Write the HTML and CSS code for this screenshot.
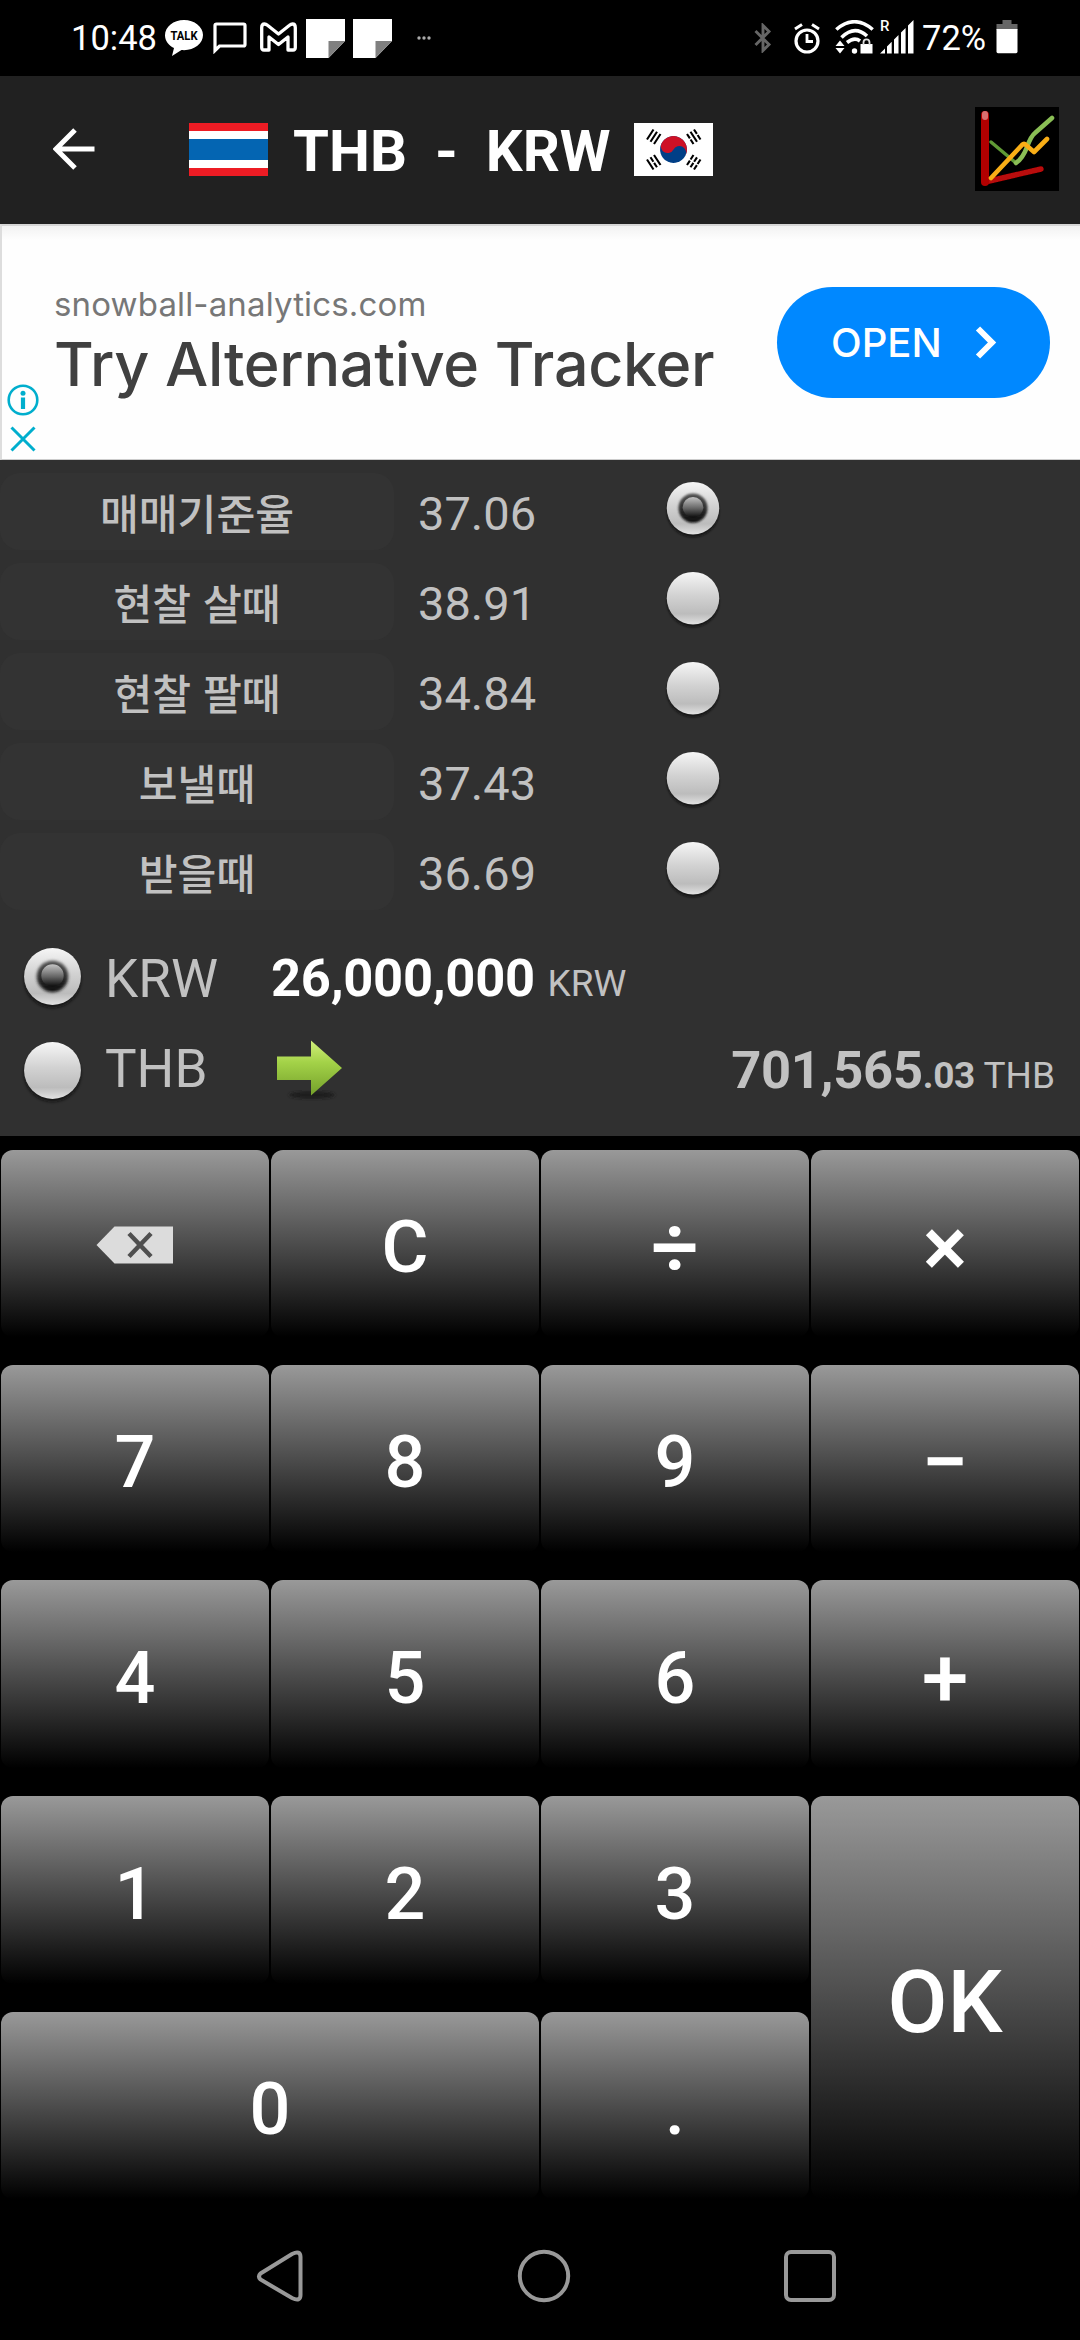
FILE: index.html
```html
<!DOCTYPE html>
<html lang="ko">
<head>
<meta charset="utf-8">
<title>THB - KRW</title>
<link rel="stylesheet" href="styles.css">
</head>
<body>
<svg class="defs" width="0" height="0" aria-hidden="true">
  <defs>
    <linearGradient id="ball" x1="0" y1="0" x2="0" y2="1"><stop offset="0" stop-color="#f6f6f6"/><stop offset=".45" stop-color="#d2d2d2"/><stop offset=".8" stop-color="#bcbcbc"/><stop offset="1" stop-color="#e2e2e2"/></linearGradient>
    <linearGradient id="dot" x1="0" y1="0" x2="0" y2="1"><stop offset="0" stop-color="#c4c4c4"/><stop offset=".55" stop-color="#666"/><stop offset="1" stop-color="#0c0c0c"/></linearGradient>
    <linearGradient id="rim" x1="0" y1="0" x2="0" y2="1"><stop offset="0" stop-color="#555"/><stop offset="1" stop-color="#0a0a0a"/></linearGradient>
    <linearGradient id="green" x1="0" y1="0" x2="0" y2="1"><stop offset="0" stop-color="#d2f07a"/><stop offset=".4" stop-color="#a3d248"/><stop offset="1" stop-color="#74a02a"/></linearGradient>
    <filter id="soft" x="-20%" y="-20%" width="140%" height="150%"><feGaussianBlur stdDeviation="1.4"/></filter>
    <filter id="haze" x="-10%" y="-10%" width="120%" height="120%"><feGaussianBlur stdDeviation=".7"/></filter>
    <symbol id="radio-off" viewBox="0 0 64 66"><circle cx="32" cy="34" r="28" fill="#111" opacity=".75" filter="url(#soft)"/><circle cx="32" cy="31" r="28" fill="url(#ball)"/></symbol>
    <symbol id="radio-on" viewBox="0 0 64 66"><circle cx="32" cy="34" r="28" fill="#111" opacity=".75" filter="url(#soft)"/><circle cx="32" cy="31" r="28" fill="url(#ball)"/><circle cx="32" cy="31" r="15.5" fill="url(#rim)" filter="url(#soft)"/><circle cx="32" cy="30" r="11" fill="url(#dot)"/></symbol>
  </defs>
</svg>
<div class="screen">
  <header class="status">
    <span class="clock">10:48</span>
    <svg class="s-talk" width="38" height="36" viewBox="0 0 38 36"><path d="M19 0C8.500 0 0 6.800 0 15.200c0 5.500 3.600 10.200 9 12.900L7 36l9.500-5.900c.8.100 1.700.1 2.500.1 10.500 0 19-6.700 19-15.100S29.500 0 19 0z" fill="#fff"/><text x="19" y="20" text-anchor="middle" textLength="27" lengthAdjust="spacingAndGlyphs" class="talk-text">TALK</text></svg>
    <svg class="s-chat" width="34" height="32" viewBox="0 0 34 32"><path d="M2 28.500V3.500Q2 2 3.500 2H30.500Q32 2 32 3.500V22.500Q32 24 30.500 24H6.500z" fill="none" stroke="#fff" stroke-width="3.200"/></svg>
    <svg class="s-mail" width="37" height="30" viewBox="0 0 37 30"><path d="M4 28Q1.700 28 1.700 25.500V5.500Q1.700 2 4.500 2Q6 2 7.500 3.300L18.500 12L29.500 3.300Q31 2 32.500 2Q35.300 2 35.300 5.500V25.500Q35.300 28 33 28H28V15L18.500 22.500L9 15V28z" fill="none" stroke="#fff" stroke-width="3.300" stroke-linejoin="round"/></svg>
    <svg class="s-note" width="39" height="39" viewBox="0 0 39 39"><path d="M0 0H39V22L22.500 39H0z" fill="#fff"/><path d="M22.500 22H39L22.500 39z" fill="#808080"/></svg>
    <svg class="s-note second" width="39" height="39" viewBox="0 0 39 39"><path d="M0 0H39V22L22.500 39H0z" fill="#fff"/><path d="M22.500 22H39L22.500 39z" fill="#808080"/></svg>
    <svg class="s-more" width="14" height="4" viewBox="0 0 14 4"><circle cx="2" cy="2" r="1.700" fill="#aaa"/><circle cx="7" cy="2" r="1.700" fill="#aaa"/><circle cx="12" cy="2" r="1.700" fill="#aaa"/></svg>
    <span class="grow"></span>
    <svg class="s-bt" width="18" height="30" viewBox="0 0 18 30"><path d="M1.500 8L15 21.500L9 27.500V2.500L15 8.500L1.500 22" fill="none" stroke="#666" stroke-width="2.900"/></svg>
    <svg class="s-alarm" width="26" height="31" viewBox="0 0 26 31" fill="none" stroke="#fff"><circle cx="13" cy="18" r="11" stroke-width="3.200"/><path d="M13 11V18.500H19" stroke-width="2.800"/><path d="M1 6L8 1.500M25 6L18 1.500" stroke-width="3"/></svg>
    <svg class="s-wifi" width="39" height="34" viewBox="0 0 39 34"><g fill="none" stroke="#fff" stroke-width="3.600"><path d="M1.300 9.500Q19.500-6 37.700 9.500"/><path d="M6.500 17.500Q19.500 4.500 32 16"/><path d="M12 22.500Q19.500 16.500 25 21"/></g><circle cx="19.500" cy="31" r="2.700" fill="#fff"/><path d="M.5 26L5 20.500L9.500 26zM.5 28L5 33.500L9.500 28z" fill="#fff"/><rect x="25.500" y="24" width="12" height="9.500" fill="#fff"/><path d="M28.500 25V22.500Q28.500 19.300 31.500 19.300T34.500 22.500V25" fill="none" stroke="#ddd" stroke-width="1.800"/></svg>
    <svg class="s-signal" width="34" height="38" viewBox="0 -4 34 38" fill="#fff"><path d="M0 33.500L5 28.500V33.500zM7 33.500V26.500L11.700 21.800V33.500zM14 33.500V19.500L18.500 15V33.500zM21 33.500V12.500L25.600 7.900V33.500zM28 33.500V5.600L33.500 0V33.500z"/><text x="0" y="11" class="roam">R</text></svg>
    <span class="pct">72%</span>
    <svg class="s-batt" width="22" height="34" viewBox="0 0 22 34"><path d="M6.500 0H15.500V4H21.500V10H.5V4H6.500z" fill="#666"/><path d="M.5 9H21.500V31.500Q21.500 33.200 20 33.200H2Q.5 33.200 .5 31.500z" fill="#fff"/></svg>
  </header>

  <div class="appbar">
    <svg class="back" width="42" height="42" viewBox="0 0 42 42"><path d="M41.500 21H3.500M22 2L3 21L22 40" fill="none" stroke="#fff" stroke-width="5"/></svg>
    <svg class="flag" width="79" height="53" viewBox="0 0 79 53"><path fill="#fff" d="M0 0h79v53H0z"/><path fill="#ed1c24" d="M0 0h79v8H0zM0 45h79v8H0z"/><path fill="#0465b2" d="M0 16h79v21H0z"/></svg>
    <h1 class="pair"><span>THB</span><span>-</span><span>KRW</span></h1>
    <svg class="flag" width="79" height="53" viewBox="0 0 79 53"><path fill="#fff" d="M0 0h79v53H0z"/>
      <g transform="translate(39.500 26.500) rotate(28)"><circle r="13.400" fill="#003f87"/><path d="M-13.400 0A13.400 13.400 0 0 1 13.400 0A6.700 6.700 0 0 0 0 0A6.700 6.700 0 0 1 -13.400 0z" fill="#ce1126"/></g>
      <g fill="none" stroke="#000" stroke-width="2.100">
        <path d="M13 16.500L19.500 6.500M16.500 18.700L23 8.700M20 21L26.500 11"/>
        <path d="M13 36.500L19.500 46.500M20 32L26.500 42"/><path d="M16.500 34.300L23 44.300" stroke-dasharray="5.300 1.300"/>
        <path d="M53 11L59.500 21M60 6.500L66.500 16.500" stroke-dasharray="5.300 1.300"/><path d="M56.500 8.700L63 18.700"/>
        <path d="M53 42L59.500 32M56.500 44.300L63 34.300M60 46.500L66.500 36.500" stroke-dasharray="5.300 1.300"/>
      </g></svg>
    <span class="grow"></span>
    <svg class="chart" width="84" height="84" viewBox="0 0 84 84"><path fill="#000" d="M0 0h84v84H0z"/><g fill="none" stroke-linecap="round" filter="url(#haze)"><path d="M16 35L41 56" stroke="#609a36" stroke-width="3.500"/><path d="M41 56Q48 51 52 40T60 26L77 11" stroke="#8abe55" stroke-width="4.600"/><path d="M10 75L66 62" stroke="#b80808" stroke-width="5.500"/><path d="M10 8V75" stroke="#b20000" stroke-width="8"/><path d="M10 7V10" stroke="#d87070" stroke-width="6"/><path d="M16 71L47 38Q49 36 51 38L59 45L72 32" stroke="#f9ae18" stroke-width="4.600" stroke-linejoin="round"/></g></svg>
  </div>

  <section class="ad">
    <div class="ad-choices">
      <svg width="32" height="32" viewBox="0 0 32 32"><circle cx="16" cy="16" r="14.300" fill="none" stroke="#00aecd" stroke-width="2.600"/><circle cx="16" cy="9.200" r="2.500" fill="#00aecd"/><path d="M16 13.500V25" stroke="#00aecd" stroke-width="4.200"/></svg>
      <svg width="32" height="26" viewBox="0 0 32 26"><path d="M4.500 1.500L27.500 24.500M27.500 1.500L4.500 24.500" stroke="#00aecd" stroke-width="3"/></svg>
    </div>
    <div class="ad-copy">
      <div class="ad-site">snowball-analytics.com</div>
      <div class="ad-title">Try Alternative Tracker</div>
    </div>
    <a class="ad-button"><span>OPEN</span><svg width="24" height="33" viewBox="0 0 24 33"><path d="M4 2.500L18 16.500L4 30.500" fill="none" stroke="#fff" stroke-width="6"/></svg></a>
  </section>

  <main class="panel">
    <div class="rates">
      <div class="rate"><span class="label">매매기준율</span><span class="value">37.06</span><svg class="radio" width="60" height="62"><use href="#radio-on"/></svg></div>
      <div class="rate"><span class="label">현찰 살때</span><span class="value">38.91</span><svg class="radio" width="60" height="62"><use href="#radio-off"/></svg></div>
      <div class="rate"><span class="label">현찰 팔때</span><span class="value">34.84</span><svg class="radio" width="60" height="62"><use href="#radio-off"/></svg></div>
      <div class="rate"><span class="label">보낼때</span><span class="value">37.43</span><svg class="radio" width="60" height="62"><use href="#radio-off"/></svg></div>
      <div class="rate"><span class="label">받을때</span><span class="value">36.69</span><svg class="radio" width="60" height="62"><use href="#radio-off"/></svg></div>
    </div>
    <div class="convert from">
      <svg class="big-radio" width="65" height="67"><use href="#radio-on"/></svg>
      <span class="code">KRW</span>
      <span class="amount"><b>26,000,000 </b><small>KRW</small></span>
    </div>
    <div class="convert to">
      <svg class="big-radio" width="65" height="67"><use href="#radio-off"/></svg>
      <span class="code">THB</span>
      <svg class="arrow" width="70" height="62" viewBox="0 0 70 62"><ellipse cx="37" cy="56" rx="23" ry="3.500" fill="#1c1c1c" filter="url(#soft)"/><path d="M2 17.500H36V1.500L67 29L36 56.500V41H2z" fill="url(#green)"/></svg>
      <span class="amount result"><b>701,565</b><b class="cents">.03</b> <small>THB</small></span>
    </div>
  </main>

  <div class="keypad">
    <button class="key back-key"><svg width="78" height="38" viewBox="0 0 78 38"><path d="M.5 19L18.500 .5H77V37.500H18.500z" fill="#dcdcdc"/><path d="M33 7.500L55 30.500M55 7.500L33 30.500" stroke="#505050" stroke-width="4.500"/></svg></button>
    <button class="key">C</button>
    <button class="key op">÷</button>
    <button class="key op">×</button>
    <button class="key">7</button>
    <button class="key">8</button>
    <button class="key">9</button>
    <button class="key op">−</button>
    <button class="key">4</button>
    <button class="key">5</button>
    <button class="key">6</button>
    <button class="key op">+</button>
    <button class="key">1</button>
    <button class="key">2</button>
    <button class="key">3</button>
    <button class="key ok">OK</button>
    <button class="key zero">0</button>
    <button class="key">.</button>
  </div>

  <nav class="navbar">
    <svg width="48" height="54" viewBox="0 0 48 54"><path d="M4.500 24.500L36 5Q44.500 1 44.500 8V46Q44.500 53 36 49L4.500 30.500Q1.500 27.500 4.500 24.500z" fill="none" stroke="#999" stroke-width="4"/></svg>
    <svg width="54" height="54" viewBox="0 0 54 54"><circle cx="27" cy="27" r="24.200" fill="none" stroke="#999" stroke-width="4"/></svg>
    <svg width="54" height="54" viewBox="0 0 54 54"><rect x="3" y="3" width="48" height="48" rx="5" fill="none" stroke="#999" stroke-width="4"/></svg>
  </nav>
</div>
</body>
</html>
```
FILE: styles.css
```css
* { box-sizing: border-box; }
body { margin: 0; background: #000; font-family: Roboto, "Noto Sans CJK KR", sans-serif; }
svg { display: block; flex: none; }
.defs { position: absolute; }
.screen { width: 1080px; height: 2340px; display: flex; flex-direction: column; background: #000; overflow: hidden; }
.grow { flex: 1; }

.status { height: 76px; flex: none; display: flex; align-items: center; padding: 0 62px 0 71px; color: #fff; font-size: 34.500px; line-height: 76px; }
.clock { width: 94px; }
.s-chat { margin-left: 10px; }
.s-mail { margin: 0 9px 2px 13px; }
.s-note.second { margin-left: 8px; }
.s-more { margin-left: 25px; }
.s-alarm { margin-left: 22px; }
.s-wifi { margin: 0 0 2px 15px; }
.s-signal { margin: 0 0 6px 6px; }
.s-batt { margin: 0 0 2px 0; }
.pct { margin-left: 8px; width: 74px; white-space: nowrap; }
.talk-text { font: 700 12.500px Roboto, sans-serif; fill: #000; }
.roam { font: 500 15px Roboto, sans-serif; fill: #fff; }

.appbar { height: 148px; flex: none; display: flex; align-items: center; padding: 0 21px 2px 53px; background: #212121; }
.back { margin-right: 94px; }
.pair { margin: 4px 0 0 25px; display: flex; gap: 28px; color: #fff; font-size: 58px; font-weight: 700; line-height: 70px; width: 341px; }

.ad { height: 236px; flex: none; display: flex; align-items: center; padding-right: 30px; background: linear-gradient(#f2f2f2, #fefefe 14px); border-top: 2px solid #d6d6d6; border-left: 2px solid #ddd; border-bottom: 1px solid #ccc; }
.ad-choices { width: 32px; margin-left: 5px; align-self: flex-end; padding-bottom: 7px; display: flex; flex-direction: column; gap: 10px; }
.ad-copy { flex: 1; padding: 3px 0 0 15px; white-space: nowrap; }
.ad-site { font: 400 33px/40px Inter, sans-serif; letter-spacing: .15px; color: #777; }
.ad-title { font: 500 61px/80px Inter, sans-serif; letter-spacing: -.3px; color: #404040; }
.ad-button { width: 273px; height: 111px; border-radius: 56px; background: #0088ff; color: #fff; display: flex; align-items: center; justify-content: space-between; padding: 0 52px 0 54px; font: 500 40px/50px Inter, sans-serif; }

.panel { height: 676px; flex: none; background: #303030; color: #c1c1c1; padding-top: 13px; }
.rates { display: grid; grid-auto-rows: 77px; gap: 13px; }
.rate { display: flex; align-items: center; }
.label { width: 394px; height: 77px; border-radius: 20px; background: #333; font: 500 42.200px/77px "Noto Sans CJK KR", sans-serif; text-align: center; }
.value { width: 245px; margin-left: 24px; padding-top: 3px; font-size: 47px; line-height: 71px; }
.radio { margin-bottom: 3px; }
.convert { height: 90px; display: flex; align-items: center; padding: 0 25px 0 20px; }
.from { margin-top: 24px; }
.from .big-radio { margin-bottom: 2px; }
.to .big-radio { margin-top: 6px; }
.code { flex: none; width: 186px; padding-left: 20px; font-size: 53px; line-height: 60px; }
.amount { white-space: pre; font-size: 37px; line-height: 60px; padding-top: 4px; }
.amount b { font-size: 52.500px; font-weight: 700; letter-spacing: -.3px; }
.amount small { font-size: 37px; }
.from b { color: #fff; }
.result { margin-left: auto; padding-top: 8px; }
.amount .cents { font-size: 37px; }
.arrow { margin: 2px 0 0 4px; }

.keypad { height: 1064px; flex: none; display: grid; grid-template-columns: repeat(4, 268px); grid-template-rows: 187px 187px 188px 188px 187px; column-gap: 2px; row-gap: 28px; padding: 14px 1px 0; }
.key { border: 0; border-radius: 12px; background: linear-gradient(#999, #000); color: #fff; font: 500 72px/84px Roboto, sans-serif; display: flex; align-items: center; justify-content: center; padding: 9px 0 0; }
.back-key { padding-top: 3px; }
.op { font-size: 84px; }
.ok { grid-column: 4; grid-row: 4 / 6; font-size: 87px; padding-top: 9px; }
.zero { grid-column: 1 / 3; }

.navbar { flex: 1; display: flex; align-items: center; justify-content: space-between; padding: 12px 243px 0 256px; }
```
